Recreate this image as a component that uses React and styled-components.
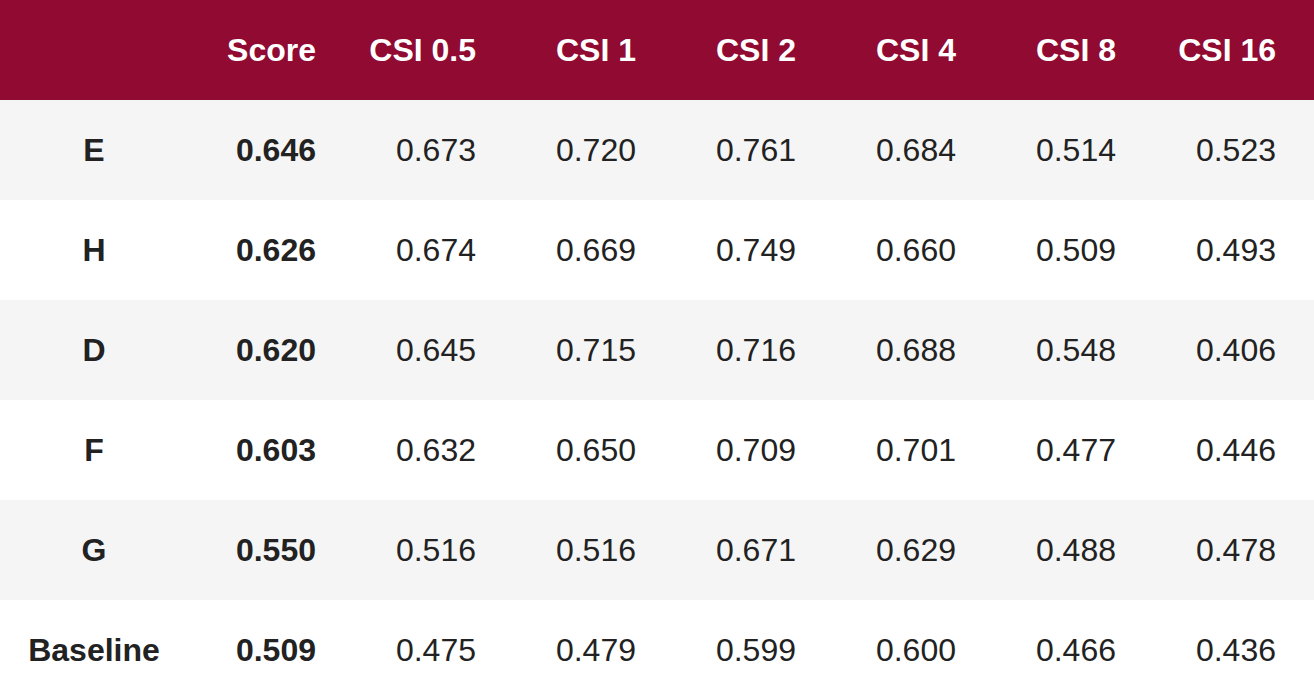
import React from "react";
import styled, { createGlobalStyle } from "styled-components";

const GlobalStyle = createGlobalStyle`
  body {
    margin: 0;
    background: #ffffff;
    font-family: "Liberation Sans", Arial, sans-serif;
  }
`;

const Table = styled.div`
  display: grid;
  grid-template-columns: 194px repeat(7, 160px);
  width: 1314px;
  font-size: 32px;
  color: #222222;
`;

const Row = styled.div`
  display: contents;
`;

const Cell = styled.div`
  height: 100px;
  display: flex;
  align-items: center;
  justify-content: ${(p) => (p.$label ? "center" : "flex-end")};
  padding: ${(p) => (p.$label ? "0 6px 0 0" : "0 38px 0 0")};
  background: ${(p) =>
    p.$head ? "#900a31" : p.$shade ? "#f5f5f5" : "#ffffff"};
  color: ${(p) => (p.$head ? "#ffffff" : "#222222")};
  font-weight: ${(p) => (p.$bold ? 700 : 400)};
  white-space: nowrap;
`;

const headers = ["", "Score", "CSI 0.5", "CSI 1", "CSI 2", "CSI 4", "CSI 8", "CSI 16"];

const rows = [
  ["E", "0.646", "0.673", "0.720", "0.761", "0.684", "0.514", "0.523"],
  ["H", "0.626", "0.674", "0.669", "0.749", "0.660", "0.509", "0.493"],
  ["D", "0.620", "0.645", "0.715", "0.716", "0.688", "0.548", "0.406"],
  ["F", "0.603", "0.632", "0.650", "0.709", "0.701", "0.477", "0.446"],
  ["G", "0.550", "0.516", "0.516", "0.671", "0.629", "0.488", "0.478"],
  ["Baseline", "0.509", "0.475", "0.479", "0.599", "0.600", "0.466", "0.436"],
];

export default function App() {
  return (
    <>
      <GlobalStyle />
      <Table>
        <Row>
          {headers.map((h, i) => (
            <Cell key={i} $head $bold $label={i === 0}>
              {h}
            </Cell>
          ))}
        </Row>
        {rows.map((r, ri) => (
          <Row key={ri}>
            {r.map((v, ci) => (
              <Cell key={ci} $shade={ri % 2 === 0} $bold={ci < 2} $label={ci === 0}>
                {v}
              </Cell>
            ))}
          </Row>
        ))}
      </Table>
    </>
  );
}
